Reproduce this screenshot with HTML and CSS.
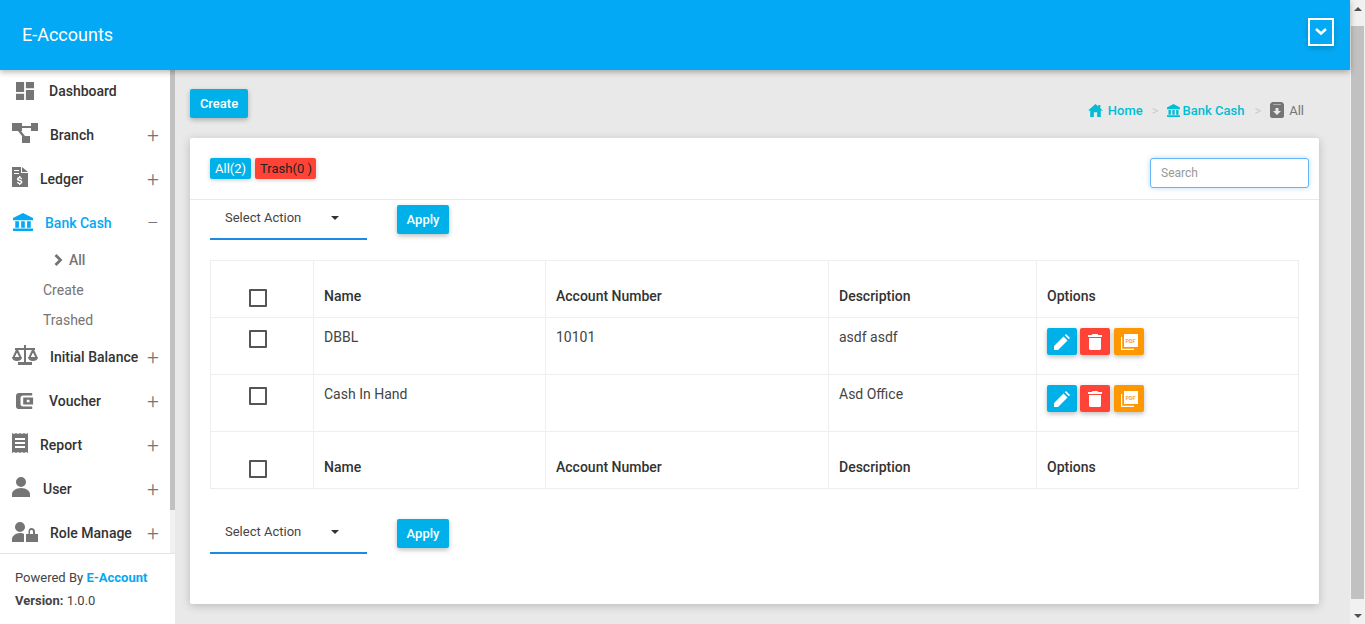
FILE: index.html
```html
<!DOCTYPE html>
<html lang="en">
<head>
<meta charset="utf-8">
<title>E-Accounts</title>
<link rel="stylesheet" href="styles.css">
</head>
<body>
<svg class="defs" aria-hidden="true">
  <symbol id="bank" viewBox="1 1 22 22" preserveAspectRatio="none"><path d="M12 1 1 7v3h22V7zM3.500 11h4v8h-4zM10 11h4v8h-4zM16.500 11h4v8h-4zM1 20h22v3H1z"/></symbol>
</svg>
<div class="viewport">
  <div class="page">
    <header class="topbar">
      <div class="brand">E-Accounts</div>
      <button class="user-toggle" aria-label="Menu"><svg width="14" height="10" viewBox="0 0 14 10"><path d="M2 2l5 4.500L12 2" fill="none" stroke="#fff" stroke-width="2.600"/></svg></button>
    </header>
    <div class="body-row">
      <aside class="sidebar">
        <div class="menu-wrap">
          <nav class="menu">
            <a class="item indent-b"><svg class="ic" viewBox="0 0 20 20"><path d="M0 0h9v11H0zM11 0h9v7h-9zM11 9h9v11h-9zM0 13h9v7H0z"/></svg><span class="lbl gap-d">Dashboard</span></a>
            <a class="item"><svg class="ic ic-w" viewBox="0 0 26 20"><path d="M0 0h10v8H0zM19 0h7v8h-7zM10 13h8v7h-8zM10 3h9v2h-9zM6 8h3l4 5h-3z"/></svg><span class="lbl gap-br">Branch</span><i class="pm">+</i></a>
            <a class="item"><svg class="ic ic-n" viewBox="0 0 16 20"><path fill-rule="evenodd" d="M0 0h9v6h7v14H0zM2 3v1h5V3zm0 3v1h5V6zm8-6 6 5h-6zM7 9v1.100C5.700 10.300 5 11.100 5 12.200c0 2.300 3.900 1.600 3.900 2.900 0 .5-.4.8-1 .8-.7 0-1.200-.3-1.300-1H5c.1 1.200.9 1.900 2 2.100V18h1.400v-1c1.300-.2 2-1 2-2 0-2.500-3.800-1.800-3.800-3 0-.4.4-.7 1-.7s1 .3 1.100.9h1.500c-.1-1.100-.8-1.800-1.800-2V9z"/></svg><span class="lbl gap-l">Ledger</span><i class="pm">+</i></a>
            <a class="item active"><svg class="ic ic-bank"><use href="#bank"/></svg><span class="lbl gap-bc">Bank Cash</span><i class="pm minus">−</i></a>
            <ul class="sub">
              <li class="sub-current"><svg width="9" height="12" viewBox="0 0 9 12"><path d="M1.500 1 6.500 6 1.500 11" fill="none" stroke="#757575" stroke-width="2.800"/></svg>All</li>
              <li>Create</li>
              <li>Trashed</li>
            </ul>
            <a class="item"><svg class="ic ic-w" viewBox="0 0 26 20"><path d="M12 0h2v3h9v2h-9v12h6v3H6v-3h6V5H3V3h9z"/><path d="M5 5 1.500 12.500M5 5l3.500 7.500M21 5l-3.500 7.500M21 5l3.500 7.500" fill="none" stroke="#757575" stroke-width="2"/><path d="M0 12h10c0 2.500-2.200 4-5 4s-5-1.500-5-4zM16 12h10c0 2.500-2.200 4-5 4s-5-1.500-5-4z"/></svg><span class="lbl gap-br">Initial Balance</span><i class="pm">+</i></a>
            <a class="item indent-b"><svg class="ic" viewBox="0 0 20 20"><path fill-rule="evenodd" d="M3 1h15v3H8C6 4 5 5 5 7v6c0 2 1 3 3 3h10v3H3c-1.500 0-3-1.500-3-3V4c0-1.500 1.500-3 3-3zm5 5h11v8H8zm4 2.500v3h3v-3z"/></svg><span class="lbl gap-d">Voucher</span><i class="pm">+</i></a>
            <a class="item"><svg class="ic ic-n" viewBox="0 0 16 20"><path fill-rule="evenodd" d="M0 0l2 1 2-1 2 1 2-1 2 1 2-1 2 1 2-1v20l-2-1-2 1-2-1-2 1-2-1-2 1-2-1-2 1zM3 5v2h10V5zm0 4v2h10V9zm0 4v2h10v-2z"/></svg><span class="lbl gap-l">Report</span><i class="pm">+</i></a>
            <a class="item"><svg class="ic ic-u" viewBox="0 0 18 20"><path d="M9 0a5 5 0 1 1 0 10A5 5 0 0 1 9 0zM0 20v-3c0-3 4-6 9-6s9 3 9 6v3z"/></svg><span class="lbl gap-u">User</span><i class="pm">+</i></a>
            <a class="item"><svg class="ic ic-w ic-role" viewBox="0 0 26 20"><path fill-rule="evenodd" d="M8 0a5 5 0 1 1 0 10A5 5 0 0 1 8 0zM0 20v-3c0-3 4-6 8-6 1.500 0 3 .3 4 1v8zM19.500 6c2 0 3.500 1.500 3.500 3.500V12h3v8H14v-8h2.500V9.500C16.500 7.500 17.500 6 19.500 6zm0 2C18.700 8 18 8.700 18 9.500V12h3V9.500C21 8.700 20.300 8 19.500 8z"/></svg><span class="lbl gap-br">Role Manage</span><i class="pm">+</i></a>
          </nav>
          <div class="sb-track"><div class="sb-thumb"></div></div>
        </div>
        <footer class="powered">
          <div>Powered By <b>E-Account</b></div>
          <div class="version"><b>Version:</b> 1.0.0</div>
        </footer>
      </aside>
      <main class="content">
        <div class="head-row">
          <button class="btn">Create</button>
          <div class="crumbs">
            <svg class="cr-home" viewBox="0 0 16 14"><path d="M8 0 11 2.600V1h2.200v3.500L16 7h-2.300v7H9.800V9H6.200v5H2.300V7H0z"/></svg><span class="cr-link">Home</span><span class="sep sep-first">&gt;</span>
            <svg class="cr-bank"><use href="#bank"/></svg><span class="cr-link">Bank Cash</span><span class="sep sep-second">&gt;</span>
            <svg class="cr-arch" viewBox="0 0 14 16"><path fill-rule="evenodd" d="M2 0h10l2 2v12c0 1-1 2-2 2H2c-1 0-2-1-2-2V2zm1.500 2-.5.500h8l-.5-.500zM5.500 6v3H3l4 4 4-4H8.500V6z"/></svg><span class="cr-cur">All</span>
          </div>
        </div>
        <section class="card">
          <div class="card-top">
            <div class="tabs"><span class="tag tag-blue">All(2)</span><span class="tag tag-red">Trash(0 )</span></div>
            <input class="search" placeholder="Search">
          </div>
          <div class="actions actions-top">
            <div class="select">Select Action<span class="caret"></span></div>
            <button class="btn btn-apply">Apply</button>
          </div>
          <table class="grid">
            <thead>
              <tr><th><span class="cb"></span></th><th>Name</th><th>Account Number</th><th>Description</th><th>Options</th></tr>
            </thead>
            <tbody>
              <tr>
                <td><span class="cb"></span></td><td>DBBL</td><td>10101</td><td>asdf asdf</td>
                <td><div class="opts">
                  <span class="op op-b"><svg viewBox="0 0 16 16"><path d="M0 16v-4L9.500 2.500l4 4L4 16zM10.800 1.200 12 0l4 4-1.200 1.200z"/></svg></span>
                  <span class="op op-r"><svg viewBox="0 0 16 16"><path d="M5.500 0h5l.7 1H15v2H1V1h3.800zM2 4h12v10.500c0 .8-.7 1.500-1.500 1.500h-9C2.700 16 2 15.300 2 14.500z"/></svg></span>
                  <span class="op op-o"><svg class="pdf" viewBox="0 0 17 16"><path d="M3 0h14v13H3z"/><path d="M0 3h1.200v11.800H13V16H0z"/><text class="pdf-text" x="4.500" y="8.500">PDF</text></svg></span>
                </div></td>
              </tr>
              <tr>
                <td><span class="cb"></span></td><td>Cash In Hand</td><td></td><td>Asd Office</td>
                <td><div class="opts">
                  <span class="op op-b"><svg viewBox="0 0 16 16"><path d="M0 16v-4L9.500 2.500l4 4L4 16zM10.800 1.200 12 0l4 4-1.200 1.200z"/></svg></span>
                  <span class="op op-r"><svg viewBox="0 0 16 16"><path d="M5.500 0h5l.7 1H15v2H1V1h3.800zM2 4h12v10.500c0 .8-.7 1.500-1.500 1.500h-9C2.700 16 2 15.300 2 14.500z"/></svg></span>
                  <span class="op op-o"><svg class="pdf" viewBox="0 0 17 16"><path d="M3 0h14v13H3z"/><path d="M0 3h1.200v11.800H13V16H0z"/><text class="pdf-text" x="4.500" y="8.500">PDF</text></svg></span>
                </div></td>
              </tr>
            </tbody>
            <tfoot>
              <tr><th><span class="cb"></span></th><th>Name</th><th>Account Number</th><th>Description</th><th>Options</th></tr>
            </tfoot>
          </table>
          <div class="actions actions-bottom">
            <div class="select">Select Action<span class="caret"></span></div>
            <button class="btn btn-apply">Apply</button>
          </div>
        </section>
      </main>
    </div>
  </div>
  <div class="page-sb">
    <span class="arrow up"></span>
    <div class="page-thumb"></div>
    <span class="arrow down"></span>
  </div>
</div>
</body>
</html>
```

FILE: styles.css
```css
* { box-sizing: border-box; }
html, body { margin: 0; height: 624px; overflow: hidden; }
body { font-family: Roboto, "Liberation Sans", sans-serif; font-size: 14px; color: #333; background: #e9e9e9; }
.defs { display: none; }
.viewport { display: flex; height: 624px; }
.page { flex: 1; min-width: 0; display: flex; flex-direction: column; }

.topbar { height: 70px; background: #03a9f4; display: flex; align-items: center; justify-content: space-between; padding: 0 16px 0 22px; box-shadow: 0 2px 6px rgba(0,0,0,.3); position: relative; z-index: 2; }
.brand { color: #fff; font-size: 18px; font-weight: 400; margin-top: -2px; }
.user-toggle { width: 26px; height: 28px; border: 2px solid #fff; background: transparent; padding: 0; display: flex; align-items: center; justify-content: center; margin-top: -6px; box-shadow: 0 2px 5px rgba(0,0,0,.2); }

.body-row { flex: 1; display: flex; min-height: 0; }
.sidebar { width: 175px; background: #fff; display: flex; flex-direction: column; flex: none; }
.menu-wrap { flex: none; height: 483px; display: flex; }
.menu { flex: 1; min-width: 0; margin-top: -1px; overflow: hidden; }
.sb-track { width: 5px; background: #f1f1f1; }
.sb-thumb { height: 440px; background: #c1c1c1; }

.item { display: flex; align-items: center; height: 44px; padding-left: 12px; color: #333; font-weight: 500; font-size: 14px; position: relative; }
.indent-b { padding-left: 16px; }
.ic { width: 20px; height: 20px; fill: #757575; flex: none; margin-top: -4px; }
.indent-b .ic { width: 18px; height: 18px; margin-top: 0; }
.ic-w { width: 26px; }
.ic-role { margin-top: -3px; }
.ic-bank { width: 20px; height: 18px; margin: -3px 0 0 1px; }
.ic-n { width: 16px; }
.ic-u { width: 18px; }
.lbl { white-space: nowrap; }
.gap-d { margin-left: 15px; }
.gap-br { margin-left: 12px; }
.gap-l { margin-left: 12px; }
.gap-bc { margin-left: 12px; }
.gap-u { margin-left: 13px; }
.pm { position: absolute; left: 147px; top: 50%; transform: translateY(-50%); font-style: normal; font-weight: 300; font-size: 21px; color: #757575; line-height: 1; }
.active .lbl { color: #03a9f4; }
.active .ic { fill: #03a9f4; }

.sub { list-style: none; margin: 0; padding: 0; }
.sub li { height: 30px; line-height: 30px; padding-left: 43px; color: #757575; font-size: 14px; }
.sub .sub-current { font-weight: 500; padding-left: 54px; display: flex; align-items: center; gap: 6px; }

.powered { flex: 1; border-top: 1px solid #e5e5e5; padding: 12px 15px 0; font-size: 13px; color: #444; line-height: 23px; background: #fff; }
.powered b { font-weight: 700; }
.powered div:first-child b { color: #03a9f4; }

.content { flex: 1; min-width: 0; padding: 19px 31px 0 15px; }
.head-row { display: flex; align-items: flex-start; justify-content: space-between; height: 49px; }
.btn { background: #00b0e8; border: 0; border-radius: 2px; color: #fff; font: 500 13px Roboto, sans-serif; height: 29px; width: 58px; padding: 0; box-shadow: 0 2px 5px rgba(0,0,0,.26); }
.crumbs { display: flex; align-items: center; font-size: 13px; font-weight: 500; margin-top: 12px; padding-right: 15px; height: 18px; }
.cr-link { color: #00bcd4; }
.cr-home { width: 15px; height: 13px; fill: #00bcd4; margin-right: 5px; }
.cr-bank { width: 13px; height: 13px; fill: #00bcd4; margin-right: 3px; }
.cr-arch { width: 14px; height: 16px; fill: #757575; margin-right: 5px; }
.sep { color: #ccc; font-weight: 400; }
.sep-first { margin: 0 8px 0 9px; }
.sep-second { margin: 0 9px 0 10px; }
.cr-cur { color: #757575; font-weight: 400; }

.card { background: #fff; border-radius: 2px; height: 466px; box-shadow: 0 2px 10px rgba(0,0,0,.2); }
.card-top { height: 62px; border-bottom: 1px solid #e9e9e9; display: flex; justify-content: space-between; padding: 20px 10px 0 20px; }
.tabs { display: flex; gap: 4px; align-items: flex-start; }
.tag { height: 21px; line-height: 21px; padding: 0 5px; border-radius: 2px; font-size: 13px; box-shadow: 0 1px 4px rgba(0,0,0,.22); }
.tag-blue { background: #00b0e8; color: #fff; }
.tag-red { background: #ff4336; color: #222; padding-right: 4px; }
.search { width: 159px; height: 30px; border: 1px solid #64b5f6; border-radius: 3px; padding: 0 10px; font: 12px Roboto, sans-serif; box-shadow: 0 0 5px rgba(33,150,243,.35); outline: 0; color: #333; }
.search::placeholder { color: #999; }

.actions { display: flex; padding-left: 20px; align-items: flex-start; }
.actions-top { height: 60px; }
.actions-bottom { margin-top: 25px; }
.select { width: 157px; height: 40px; border-bottom: 2px solid #1e88e5; display: flex; align-items: center; padding: 0 15px 4px; font-size: 13px; color: #444; position: relative; flex: none; }
.caret { position: absolute; left: 121px; top: 16px; border: 4px solid transparent; border-top-color: #333; border-bottom: 0; }
.btn-apply { margin-left: 30px; margin-top: 5px; width: 52px; }

.grid { border-collapse: collapse; margin: 0 20px; width: 1089px; table-layout: fixed; font-size: 14px; }
.grid th, .grid td { border: 1px solid #eee; padding: 10px; text-align: left; vertical-align: top; height: 57px; }
.grid th { font-weight: 500; color: #333; vertical-align: bottom; padding-bottom: 13px; }
.grid td { line-height: 18px; color: #444; }
.grid th:nth-child(1), .grid td:nth-child(1) { width: 103px; padding: 0 0 0 38px; }
.grid th:nth-child(2) { width: 232px; }
.grid th:nth-child(3) { width: 283px; }
.grid th:nth-child(4) { width: 208px; }
.grid td:nth-child(1) { padding-top: 12px; }
.grid th:nth-child(1) { vertical-align: bottom; padding-bottom: 10px; }
.cb { display: block; width: 18px; height: 18px; border: 2px solid #555; border-radius: 1px; }

.opts { display: flex; gap: 3px; }
.op { width: 30px; height: 27px; border-radius: 2px; display: flex; align-items: center; justify-content: center; box-shadow: 0 2px 5px rgba(0,0,0,.26); }
.op svg { width: 16px; height: 16px; fill: #fff; }
.op .pdf { width: 17px; }
.op-b { background: #00b0e8; }
.op-r { background: #ff4336; }
.op-o { background: #ff9800; margin-left: 1px; }
.pdf-text { fill: #ffa726; font: 700 5.500px Roboto, sans-serif; }

.page-sb { width: 15px; flex: none; background: #f1f1f1; position: relative; padding: 26px 1px 0; }
.page-thumb { height: 573px; background: #c1c1c1; }
.arrow { position: absolute; left: 3.500px; border: 4px solid transparent; }
.arrow.up { top: 7px; border-bottom-color: #505050; border-top: 0; }
.arrow.down { bottom: 6px; border-top-color: #505050; border-bottom: 0; }
```
